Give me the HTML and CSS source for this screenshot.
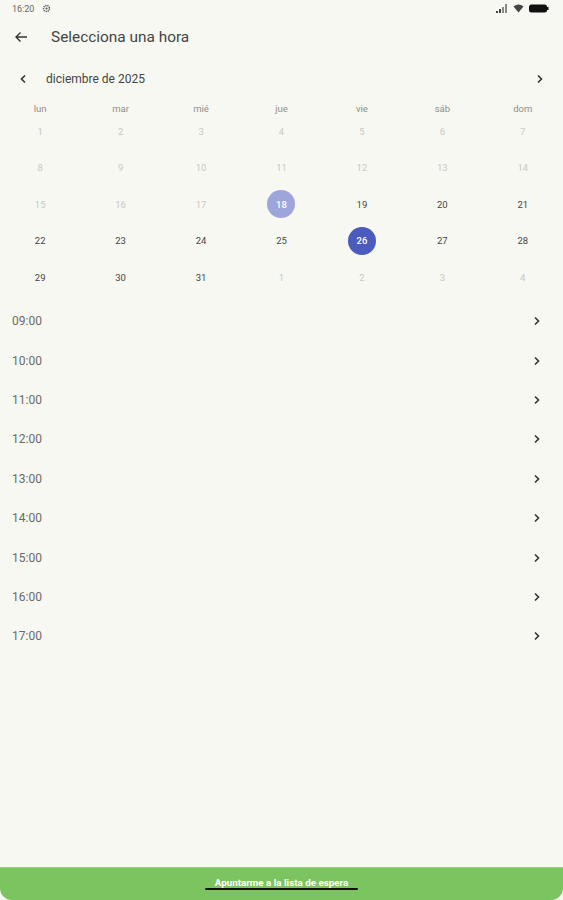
FILE: index.html
```html
<!DOCTYPE html>
<html lang="es">
<head>
    <meta charset="UTF-8">
    <meta name="viewport" content="width=device-width, initial-scale=1.0">
    <title>Selecciona una hora</title>
    <link rel="stylesheet" href="styles.css">
</head>
<body>
    <div id="screen">
        <div class="status-bar">
            <span class="clock">16:20</span>
            <svg class="gear" width="9" height="9" viewBox="0 0 10 10">
                <circle cx="5" cy="5" r="3.3" fill="none" stroke="#555" stroke-width="1.6" stroke-dasharray="1.4 0.9"/>
                <circle cx="5" cy="5" r="1.2" fill="#555"/>
            </svg>
            <div class="status-icons">
                <svg width="12" height="9" viewBox="0 0 12 9">
                    <rect x="0" y="7" width="2" height="2" fill="#444"/>
                    <rect x="3" y="5" width="2" height="4" fill="#444"/>
                    <rect x="6" y="3" width="2" height="6" fill="#888"/>
                    <rect x="9" y="0" width="2" height="9" fill="#888"/>
                </svg>
                <svg width="11" height="9" viewBox="0 0 11 9">
                    <path d="M0.5 2.5 Q5.5 -1.5 10.5 2.5 L5.5 8.5 Z" fill="#444"/>
                </svg>
                <svg width="20" height="9" viewBox="0 0 20 9">
                    <rect x="0" y="0.5" width="18" height="8" rx="2.5" fill="#111"/>
                    <rect x="18" y="3" width="1.5" height="3" fill="#111"/>
                </svg>
            </div>
        </div>

        <div class="app-bar">
            <svg class="back" width="14" height="12" viewBox="0 0 14 12">
                <path d="M13 6 H2 M6.5 1.5 L2 6 L6.5 10.5" fill="none" stroke="#333" stroke-width="1.4"/>
            </svg>
            <h1>Selecciona una hora</h1>
        </div>

        <div class="month-nav">
            <svg class="chev" width="8" height="10" viewBox="0 0 8 10">
                <path d="M6 1.5 L2.5 5 L6 8.5" fill="none" stroke="#333" stroke-width="1.6"/>
            </svg>
            <span class="month-label">diciembre de 2025</span>
            <svg class="chev next" width="8" height="10" viewBox="0 0 8 10">
                <path d="M2 1.5 L5.5 5 L2 8.5" fill="none" stroke="#333" stroke-width="1.6"/>
            </svg>
        </div>

        <div class="weekdays">
            <span>lun</span><span>mar</span><span>mié</span><span>jue</span><span>vie</span><span>sáb</span><span>dom</span>
        </div>
        <div id="calendar" class="calendar"></div>

        <div id="slots" class="slots"></div>

        <div class="bottom-bar">
            <span class="waitlist">Apuntarme a la lista de espera</span>
            <div class="nav-handle"></div>
        </div>
    </div>

    <script>
        const calendar = document.getElementById("calendar");
        // diciembre 2025 empieza en lunes
        const days = [];
        for (let d = 1; d <= 31; d++) days.push({ n: d, cur: true });
        for (let d = 1; d <= 4; d++) days.push({ n: d, cur: false });

        days.forEach(day => {
            const cell = document.createElement("div");
            cell.classList.add("day");
            const num = document.createElement("span");
            num.textContent = day.n;
            if (!day.cur || day.n < 18) cell.classList.add("disabled");
            if (day.cur && day.n === 18) cell.classList.add("today");
            if (day.cur && day.n === 26) cell.classList.add("selected");
            cell.appendChild(num);
            calendar.appendChild(cell);
        });

        const slots = document.getElementById("slots");
        ["09:00", "10:00", "11:00", "12:00", "13:00", "14:00", "15:00", "16:00", "17:00"].forEach(time => {
            const row = document.createElement("div");
            row.classList.add("slot");
            row.innerHTML = `<span>${time}</span>
                <svg width="8" height="10" viewBox="0 0 8 10"><path d="M2 1.5 L5.5 5 L2 8.5" fill="none" stroke="#333" stroke-width="1.6"/></svg>`;
            slots.appendChild(row);
        });
    </script>
</body>
</html>
```

FILE: styles.css
```css
html, body {
    margin: 0;
    padding: 0;
}

body {
    font-family: Roboto, 'Noto Sans', sans-serif;
    background-color: #f7f8f1;
    color: #333;
}

#screen {
    width: 563px;
    height: 900px;
    display: flex;
    flex-direction: column;
    overflow: hidden;
}

.status-bar {
    height: 17px;
    display: flex;
    align-items: center;
    padding: 0 14px 0 12px;
    font-size: 9px;
    color: #666;
}

.gear {
    margin-left: 8px;
}

.status-icons {
    margin-left: auto;
    display: flex;
    align-items: center;
    gap: 5px;
}

.app-bar {
    height: 40px;
    display: flex;
    align-items: center;
    padding-left: 14px;
}

.app-bar h1 {
    margin: 0 0 0 23px;
    font-size: 15.4px;
    font-weight: 400;
    color: #444;
}

.month-nav {
    height: 44px;
    display: flex;
    align-items: center;
    padding: 0 19px;
}

.month-label {
    margin-left: 19px;
    font-size: 12px;
    color: #444;
}

.chev.next {
    margin-left: auto;
}

.weekdays {
    display: grid;
    grid-template-columns: repeat(7, 1fr);
    height: 12px;
    line-height: 16px;
    font-size: 9.5px;
    color: #8f8f8b;
    text-align: center;
}

.calendar {
    display: grid;
    grid-template-columns: repeat(7, 1fr);
    grid-auto-rows: 36.5px;
}

.day {
    display: flex;
    align-items: center;
    justify-content: center;
    font-size: 9.5px;
    color: #444;
}

.day span {
    width: 28px;
    height: 28px;
    border-radius: 50%;
    display: flex;
    align-items: center;
    justify-content: center;
}

.day.disabled {
    color: #c8c9c2;
}

.day.today span {
    background-color: #9ea5dc;
    color: #fff;
    font-weight: 500;
}

.day.selected span {
    background-color: #4b5bbd;
    color: #fff;
    font-weight: 500;
}

.slots {
    flex: 1;
    margin-top: 6px;
}

.slot {
    height: 39.4px;
    display: flex;
    align-items: center;
    justify-content: space-between;
    padding: 0 22px 0 12px;
    font-size: 12px;
    color: #6a6a67;
}

.bottom-bar {
    position: relative;
    height: 33px;
    background-color: #7cc460;
    border-top: 1px solid #92d27a;
    border-radius: 0 0 12px 12px;
    box-sizing: border-box;
    text-align: center;
}

.waitlist {
    display: block;
    padding-top: 9px;
    font-size: 9.8px;
    font-weight: 700;
    color: #fff;
}

.nav-handle {
    position: absolute;
    left: 205px;
    top: 20px;
    width: 153px;
    height: 2px;
    border-radius: 1px;
    background-color: #111;
}
```
